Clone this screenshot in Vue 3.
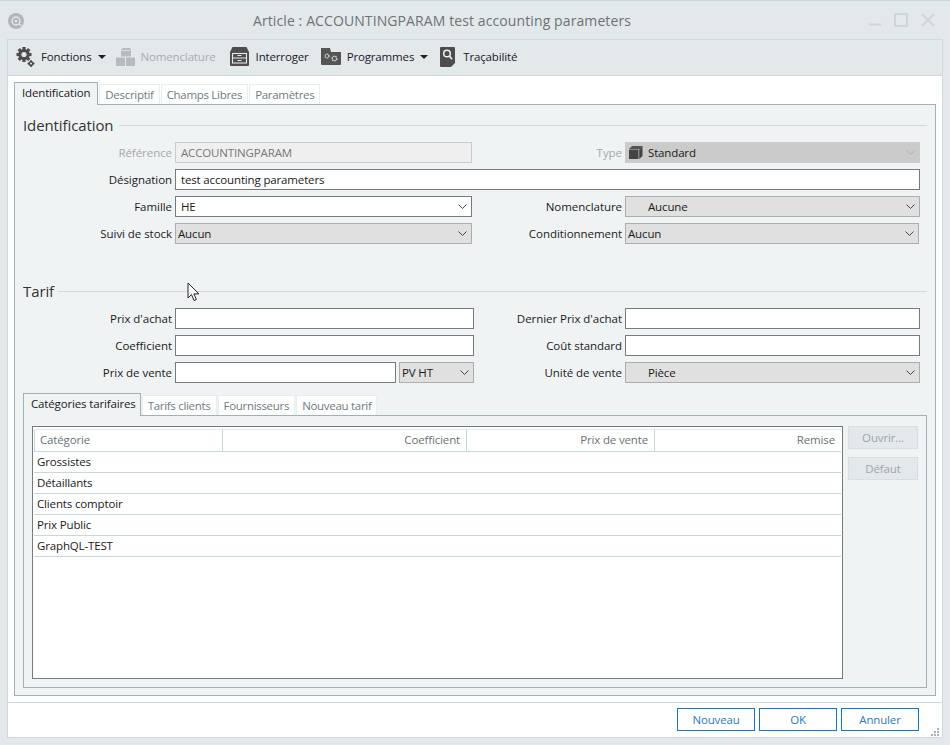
<template>
  <div class="window">
    <header class="titlebar">
      <svg class="app-icon" width="16" height="16" viewBox="0 0 16 16">
        <circle cx="8" cy="8" r="8" fill="#b0b6ba" />
        <circle cx="8" cy="8" r="4" fill="none" stroke="#e3e8ea" stroke-width="1.4" />
        <rect x="6.8" y="6.8" width="2.4" height="2.4" fill="#e3e8ea" />
        <path d="M11 11l3 2" stroke="#e3e8ea" stroke-width="1.2" />
      </svg>
      <div class="title">Article : ACCOUNTINGPARAM test accounting parameters</div>
      <div class="win-btns">
        <svg width="12" height="12" viewBox="0 0 12 12"><path d="M0 10.5h12" stroke="#ced6da" stroke-width="2" /></svg>
        <svg width="14" height="14" viewBox="0 0 14 14"><rect x="1" y="1" width="12" height="12" fill="none" stroke="#ced6da" stroke-width="2" /></svg>
        <svg width="14" height="14" viewBox="0 0 14 14"><path d="M1 1l12 12M13 1L1 13" stroke="#ced6da" stroke-width="2" /></svg>
      </div>
    </header>

    <div class="frame">
      <div class="toolbar">
        <button class="tool">
          <svg width="19" height="20" viewBox="0 0 19 20">
            <g fill="#4d4d4d">
              <circle cx="8" cy="7.5" r="5.6" />
              <rect x="6.4" y="0" width="3.2" height="15" />
              <rect x="0.5" y="5.9" width="15" height="3.2" />
              <rect x="6.4" y="0" width="3.2" height="15" transform="rotate(45 8 7.5)" />
              <rect x="6.4" y="0" width="3.2" height="15" transform="rotate(-45 8 7.5)" />
              <circle cx="15" cy="16.5" r="2.6" />
              <rect x="14.2" y="13" width="1.6" height="7" />
              <rect x="11.5" y="15.7" width="7" height="1.6" />
            </g>
            <circle cx="8" cy="7.5" r="2.6" fill="#e3e8ea" />
            <circle cx="15" cy="16.5" r="1" fill="#e3e8ea" />
          </svg>
          <span class="tool-label">Fonctions</span>
          <span class="caret"></span>
        </button>
        <button class="tool off">
          <svg width="19" height="18" viewBox="0 0 19 18">
            <g fill="#b5bbbf">
              <path d="M7 0h7l1 2v6.500H5V2z" />
              <rect x="0" y="9.500" width="9" height="8.500" />
              <rect x="10" y="9.500" width="9" height="8.500" />
            </g>
            <path d="M5.500 2.500h9" stroke="#e3e8ea" stroke-width=".8" />
          </svg>
          <span class="tool-label">Nomenclature</span>
        </button>
        <button class="tool">
          <svg width="20" height="19" viewBox="0 0 20 19">
            <path d="M2.500 0h14l2.500 5v13a1 1 0 0 1-1 1H1a1 1 0 0 1-1-1V5z" fill="#4d4d4d" />
            <rect x="2.500" y="6.500" width="14" height="9.500" fill="none" stroke="#e3e8ea" stroke-width="1.1" />
            <path d="M2.500 11h14M7.500 8.500h4M7.500 13.500h4" stroke="#e3e8ea" stroke-width="1.1" />
          </svg>
          <span class="tool-label">Interroger</span>
        </button>
        <button class="tool">
          <svg width="20" height="17" viewBox="0 0 20 17">
            <path d="M0 0h9l1 4h10v12a1 1 0 0 1-1 1H1a1 1 0 0 1-1-1z" fill="#555" />
            <circle cx="6" cy="8" r="1.900" fill="none" stroke="#d5d9db" stroke-width="1.300" stroke-dasharray="1.300 .6" />
            <circle cx="13.500" cy="10.500" r="2.300" fill="none" stroke="#d5d9db" stroke-width="1.500" stroke-dasharray="1.400 .7" />
          </svg>
          <span class="tool-label">Programmes</span>
          <span class="caret"></span>
        </button>
        <button class="tool">
          <svg width="17" height="20" viewBox="0 0 17 20">
            <path d="M1 0h13a1 1 0 0 1 1 1v15l-4 4H1a1 1 0 0 1-1-1V1a1 1 0 0 1 1-1z" fill="#4d4d4d" />
            <circle cx="7" cy="6.500" r="3.300" fill="none" stroke="#eef1f2" stroke-width="1.500" />
            <path d="M9.400 9l2.600 3.200" stroke="#eef1f2" stroke-width="1.700" />
          </svg>
          <span class="tool-label">Traçabilité</span>
        </button>
      </div>

      <main class="body">
        <nav class="tabs">
          <div v-for="(t, i) in mainTabs" :key="t" class="tab" :class="{ active: i === 0 }">{{ t }}</div>
        </nav>
        <section class="page">
          <div class="group-title"><span>Identification</span></div>
          <div class="form">
            <label class="muted">Référence</label>
            <div class="field readonly narrow">ACCOUNTINGPARAM</div>
            <label class="muted">Type</label>
            <div class="combo dark">
              <svg class="cube" width="14" height="13" viewBox="0 0 14 13">
                <path d="M3 0h11l-3 3H0z" fill="#555" />
                <rect x="0" y="3.500" width="9.500" height="9.500" fill="#444" />
                <path d="M10.200 3.500l3.300-3v9.500l-3.300 3z" fill="#444" />
              </svg>
              <span>Standard</span>
              <svg class="chev" width="9" height="5" viewBox="0 0 9 5"><path d="M.5.500l4 4 4-4" fill="none" stroke="#adb2b5" /></svg>
            </div>

            <label>Désignation</label>
            <div class="field wide">test accounting parameters</div>

            <label>Famille</label>
            <div class="combo white narrow">
              <span>HE</span>
              <svg class="chev" width="9" height="5" viewBox="0 0 9 5"><path d="M.5.500l4 4 4-4" fill="none" stroke="#444" /></svg>
            </div>
            <label>Nomenclature</label>
            <div class="combo indent">
              <span>Aucune</span>
              <svg class="chev" width="9" height="5" viewBox="0 0 9 5"><path d="M.5.500l4 4 4-4" fill="none" stroke="#444" /></svg>
            </div>

            <label>Suivi de stock</label>
            <div class="combo tight narrow">
              <span>Aucun</span>
              <svg class="chev" width="9" height="5" viewBox="0 0 9 5"><path d="M.5.500l4 4 4-4" fill="none" stroke="#444" /></svg>
            </div>
            <label>Conditionnement</label>
            <div class="combo tight shorter">
              <span>Aucun</span>
              <svg class="chev" width="9" height="5" viewBox="0 0 9 5"><path d="M.5.500l4 4 4-4" fill="none" stroke="#444" /></svg>
            </div>
          </div>

          <div class="group-title second"><span>Tarif</span></div>
          <div class="form">
            <label>Prix d'achat</label>
            <div class="field"></div>
            <label>Dernier Prix d'achat</label>
            <div class="field"></div>

            <label>Coefficient</label>
            <div class="field"></div>
            <label>Coût standard</label>
            <div class="field"></div>

            <label>Prix de vente</label>
            <div class="price">
              <div class="field"></div>
              <div class="combo tight pv">
                <span>PV HT</span>
                <svg class="chev" width="9" height="5" viewBox="0 0 9 5"><path d="M.5.500l4 4 4-4" fill="none" stroke="#444" /></svg>
              </div>
            </div>
            <label>Unité de vente</label>
            <div class="combo indent">
              <span>Pièce</span>
              <svg class="chev" width="9" height="5" viewBox="0 0 9 5"><path d="M.5.500l4 4 4-4" fill="none" stroke="#444" /></svg>
            </div>
          </div>

          <nav class="tabs inner">
            <div v-for="(t, i) in priceTabs" :key="t" class="tab" :class="{ active: i === 0 }">{{ t }}</div>
          </nav>
          <div class="panel">
            <div class="grid">
              <div class="grid-head">
                <div class="th first">Catégorie</div>
                <div class="th">Coefficient</div>
                <div class="th">Prix de vente</div>
                <div class="th">Remise</div>
              </div>
              <div v-for="c in categories" :key="c" class="row">{{ c }}</div>
            </div>
            <div class="side">
              <button class="side-btn">Ouvrir...</button>
              <button class="side-btn">Défaut</button>
            </div>
          </div>
        </section>
      </main>

      <footer class="footer">
        <button class="btn">Nouveau</button>
        <button class="btn">OK</button>
        <button class="btn">Annuler</button>
        <svg class="grip" width="8" height="8" viewBox="0 0 8 8">
          <path d="M6 0h2v2H6zM3 3h2v2H3zM6 3h2v2H6zM0 6h2v2H0zM3 6h2v2H3zM6 6h2v2H6z" fill="#a9b2b7" />
        </svg>
      </footer>
    </div>

    <svg class="cursor" width="14" height="20" viewBox="0 0 14 20">
      <path d="M1 1v15l3.500-3.400L7 18.500l2.400-1-2.500-5.600h5z" fill="#fff" stroke="#222" stroke-width="1" />
    </svg>
  </div>
</template>

<script setup>
const mainTabs = ['Identification', 'Descriptif', 'Champs Libres', 'Paramètres']
const priceTabs = ['Catégories tarifaires', 'Tarifs clients', 'Fournisseurs', 'Nouveau tarif']
const categories = ['Grossistes', 'Détaillants', 'Clients comptoir', 'Prix Public', 'GraphQL-TEST']
</script>

<style>
html, body {
  margin: 0;
  background: #e3e8ea;
}
</style>

<style scoped>
.window {
  position: relative;
  width: 950px;
  height: 745px;
  box-sizing: border-box;
  display: flex;
  flex-direction: column;
  background: #e3e8ea;
  border-top: 1px solid #cdd6da;
  font-family: "Open Sans", "Noto Sans", sans-serif;
  font-size: 11.5px;
  letter-spacing: -0.15px;
  color: #1a1a1a;
  overflow: hidden;
}

.titlebar {
  height: 38px;
  display: flex;
  align-items: center;
  position: relative;
  padding-left: 8px;
}

.app-icon {
  margin-top: 2px;
}

.title {
  position: absolute;
  left: 0;
  right: 66px;
  text-align: center;
  font-size: 14px;
  letter-spacing: 0.1px;
  color: #6d7377;
}

.win-btns {
  margin-left: auto;
  margin-right: 15px;
  display: flex;
  align-items: center;
  gap: 13px;
}

.frame {
  flex: 1;
  min-height: 0;
  margin: 0 7px 7px;
  border: 1px solid #cfd8dc;
  background: #fff;
  display: flex;
  flex-direction: column;
}

.toolbar {
  display: flex;
  align-items: center;
  padding: 0 0 2px 8px;
  background: #e3e8ea;
  border-bottom: 1px solid #cfd8dc;
  height: 33px;
}

.tool {
  display: flex;
  align-items: center;
  gap: 6px;
  border: none;
  background: none;
  padding: 0;
  margin-right: 12px;
  font: inherit;
  letter-spacing: inherit;
  color: #1a1a2a;
}

.tool:first-child {
  margin-right: 10px;
}

.tool.off {
  margin-right: 14px;
  color: #a8adb0;
}

.tool-label {
  white-space: nowrap;
}

.caret {
  width: 0;
  height: 0;
  border-left: 4px solid transparent;
  border-right: 4px solid transparent;
  border-top: 4px solid #222;
}

.body {
  flex: 1;
  min-height: 0;
  padding: 6px;
  display: flex;
  flex-direction: column;
}

.tabs {
  display: flex;
  align-items: flex-end;
  gap: 1px;
  height: 22px;
  position: relative;
  z-index: 1;
}

.tab {
  height: 20px;
  line-height: 19px;
  padding: 0 5px;
  box-sizing: border-box;
  background: #fff;
  color: #6f7b81;
  letter-spacing: -0.3px;
  border: 1px solid #e8edef;
  border-bottom: none;
  white-space: nowrap;
}

.tab.active {
  height: 23px;
  margin-bottom: -1px;
  padding: 0 7px;
  line-height: 19px;
  letter-spacing: -0.15px;
  color: #1a1a1a;
  background: #f0f3f4;
  border: 1px solid #9fb0b8;
  border-bottom: none;
}

.tabs.inner .tab.active {
  padding: 0 4px 0 7px;
}

.page {
  flex: 1;
  min-height: 0;
  background: #f0f3f4;
  border: 1px solid #9fb0b8;
  padding: 10px 8px 7px 8px;
  display: flex;
  flex-direction: column;
}

.group-title {
  height: 20px;
  display: flex;
  align-items: center;
  gap: 6px;
  font-size: 15px;
  letter-spacing: -0.1px;
  color: #333;
  margin-bottom: 7px;
}

.group-title::after {
  content: "";
  flex: 1;
  height: 1px;
  background: #d3dadd;
}

.group-title.second {
  gap: 4px;
  margin-top: 37px;
  margin-bottom: 7px;
}

.form {
  display: grid;
  grid-template-columns: 149px 299px 145px 295px;
  grid-auto-rows: 21px;
  column-gap: 3px;
  row-gap: 6px;
}

.form label {
  text-align: right;
  line-height: 21px;
  letter-spacing: -0.05px;
  white-space: nowrap;
}

.form label.muted {
  color: #a3a8ab;
}

.field,
.combo {
  box-sizing: border-box;
  height: 21px;
  line-height: 19px;
  border: 1px solid #757c80;
  background: #fff;
  padding-left: 5px;
  white-space: nowrap;
}

.field.narrow,
.combo.narrow {
  width: 297px;
}

.field.readonly {
  background: #efefef;
  border-color: #c8cccd;
  color: #777;
}

.field.wide {
  grid-column: 2 / 5;
}

.combo {
  display: flex;
  align-items: center;
  background: #e0e0e0;
  border-color: #adadad;
}

.combo .chev {
  margin-left: auto;
  margin-right: 4px;
}

.combo.white {
  background: #fff;
  border-color: #757c80;
}

.combo.dark {
  background: #cbcbcb;
  border-color: #cbcbcb;
  padding-left: 3px;
}

.combo.indent {
  padding-left: 22px;
}

.combo.tight {
  padding-left: 2px;
}

.combo.shorter {
  width: 294px;
}

.cube {
  margin-right: 5px;
}

.price {
  display: flex;
  gap: 3px;
}

.price .field {
  flex: 1;
}

.combo.pv {
  width: 75px;
}

.tabs.inner {
  margin-top: 10px;
}

.panel {
  flex: 1;
  min-height: 0;
  background: #f0f3f4;
  border: 1px solid #9fb0b8;
  padding: 10px 8px 8px 8px;
  display: flex;
  gap: 5px;
}

.grid {
  width: 811px;
  box-sizing: border-box;
  background: #fff;
  border: 1px solid #757c80;
  padding: 2px 1px 0;
}

.grid-head {
  display: grid;
  grid-template-columns: 188px 244px 188px 187px;
  height: 23px;
  border-bottom: 1px solid #c9d6dc;
  box-sizing: border-box;
}

.th {
  line-height: 20px;
  text-align: right;
  padding-right: 6px;
  color: #6a7277;
  border-left: 1px solid #c9d6dc;
  border-top: 1px solid #e4eaed;
}

.th.first {
  text-align: left;
  padding-left: 5px;
}

.row {
  height: 21px;
  box-sizing: border-box;
  line-height: 20px;
  padding-left: 3px;
  border-bottom: 1px solid #c9d6dc;
}

.side {
  display: flex;
  flex-direction: column;
  gap: 8px;
}

.side-btn {
  width: 70px;
  height: 23px;
  padding: 0;
  border: 1px solid #d8dfe2;
  background: #e3e8ea;
  color: #9ea6aa;
  font: inherit;
  letter-spacing: inherit;
}

.footer {
  height: 35px;
  border-top: 1px solid #cfd8dc;
  box-sizing: border-box;
  display: flex;
  align-items: center;
  justify-content: flex-end;
  gap: 4px;
  padding: 0 23px 2px 0;
  position: relative;
}

.btn {
  width: 78px;
  height: 23px;
  padding: 0;
  border: 1px solid #0f78c8;
  background: #fff;
  color: #2c79c4;
  font: inherit;
  letter-spacing: inherit;
}

.grip {
  position: absolute;
  right: 3px;
  bottom: 1px;
}

.cursor {
  position: absolute;
  left: 187px;
  top: 281px;
}
</style>
